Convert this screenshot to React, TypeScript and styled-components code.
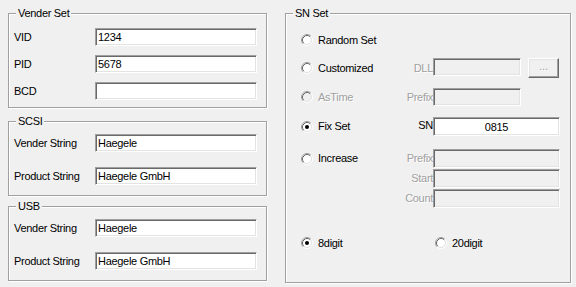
import React from 'react';
import styled, { createGlobalStyle } from 'styled-components';

const FONT = '"Liberation Sans", Arial, sans-serif';

const GlobalStyle = createGlobalStyle`
    html, body {
        margin: 0;
        padding: 0;
        background: #f0f0f0;
    }
    body {
        font-family: ${FONT};
        font-size: 11px;
        letter-spacing: -0.3px;
        color: #000;
    }
`;

const Window = styled.div`
    display: flex;
    align-items: flex-start;
    gap: 18px;
    width: 576px;
    height: 287px;
    box-sizing: border-box;
    padding: 7px 0 0 8px;
    background: #f0f0f0;
`;

const Column = styled.div`
    display: flex;
    flex-direction: column;
    width: 259px;
`;

const GroupBox = styled.fieldset<{ $width: number; $mt?: number }>`
    margin: ${(p) => p.$mt ?? 0}px 0 0 0;
    padding: 0;
    min-width: 0;
    width: ${(p) => p.$width}px;
    box-sizing: border-box;
    border: 1px solid #a0a0a0;
    box-shadow: inset 1px 1px 0 #fff, 1px 1px 0 #fff;
`;

const Caption = styled.legend`
    margin-left: 7px;
    padding: 0 2px;
    line-height: 13px;
    font-size: 11px;
    background: #f0f0f0;
`;

const FieldGrid = styled.div<{ $pt: number; $pb: number; $gap: number }>`
    display: grid;
    grid-template-columns: 81px 162px;
    grid-auto-rows: 18px;
    row-gap: ${(p) => p.$gap}px;
    align-items: center;
    padding: ${(p) => p.$pt}px 0 ${(p) => p.$pb}px 5px;
`;

const FieldLabel = styled.span`
    line-height: 13px;
    white-space: nowrap;
`;

const TextBox = styled.input<{ $w: number; $h: number; $center?: boolean }>`
    box-sizing: border-box;
    width: ${(p) => p.$w}px;
    height: ${(p) => p.$h}px;
    margin: 0;
    padding: 0 2px;
    font-family: ${FONT};
    font-size: 11px;
    letter-spacing: -0.3px;
    color: #000;
    text-align: ${(p) => (p.$center ? 'center' : 'left')};
    background: ${(p) => (p.disabled ? '#f0f0f0' : '#fff')};
    border-style: solid;
    border-width: 1px;
    border-color: #a0a0a0 #fff #fff #a0a0a0;
    box-shadow: inset 1px 1px 0 #696969, inset -1px -1px 0 #e3e3e3;
    outline: none;
`;

const SnBody = styled.div`
    display: flex;
    flex-direction: column;
    padding: 11px 9px 30px 15px;
`;

const OptionRow = styled.div<{ $mt: number; $minH: number }>`
    display: grid;
    grid-template-columns: 106px 26px 127px;
    grid-auto-rows: minmax(${(p) => p.$minH}px, auto);
    row-gap: 1px;
    align-items: center;
    margin-top: ${(p) => p.$mt}px;
`;

const RadioOption = styled.label<{ $disabled?: boolean }>`
    display: flex;
    align-items: center;
    gap: 5px;
    line-height: 13px;
    white-space: nowrap;
    color: ${(p) => (p.$disabled ? '#a0a0a0' : '#000')};
    text-shadow: ${(p) => (p.$disabled ? '1px 1px 0 #fff' : 'none')};
    svg {
        display: block;
        flex: none;
    }
`;

const SideLabel = styled.span<{ $disabled?: boolean; $top?: boolean }>`
    grid-column: 2;
    justify-self: end;
    align-self: ${(p) => (p.$top ? 'start' : 'center')};
    margin-top: ${(p) => (p.$top ? '2px' : '0')};
    line-height: 13px;
    white-space: nowrap;
    color: ${(p) => (p.$disabled ? '#a0a0a0' : '#000')};
    text-shadow: ${(p) => (p.$disabled ? '1px 1px 0 #fff' : 'none')};
`;

const DllCell = styled.div`
    display: flex;
    align-items: flex-start;
    gap: 7px;
`;

const FarCell = styled.div`
    grid-column: 3;
    padding-left: 2px;
`;

const BrowseButton = styled.button`
    box-sizing: border-box;
    width: 31px;
    height: 20px;
    margin: 0;
    padding: 0 0 4px;
    background: #f0f0f0;
    border: 1px solid;
    border-color: #fff #696969 #696969 #fff;
    box-shadow: inset -1px -1px 0 #a0a0a0, inset 1px 1px 0 #e3e3e3;
    color: #a0a0a0;
    text-shadow: 1px 1px 0 #fff;
    font-family: ${FONT};
    font-size: 11px;
    line-height: 13px;
`;

function Radio({ label, checked, disabled }: { label: string; checked?: boolean; disabled?: boolean }) {
    return (
        <RadioOption $disabled={disabled}>
            <svg width="12" height="12" viewBox="0 0 12 12">
                <circle cx="6" cy="6" r="4" fill={disabled ? '#f0f0f0' : '#fff'} />
                <path d="M2.11 9.89 A5.5 5.5 0 0 1 9.89 2.11" fill="none" stroke="#a0a0a0" strokeWidth="1" />
                <path d="M9.89 2.11 A5.5 5.5 0 0 1 2.11 9.89" fill="none" stroke="#fff" strokeWidth="1" />
                <path d="M2.82 9.18 A4.5 4.5 0 0 1 9.18 2.82" fill="none" stroke="#696969" strokeWidth="1" />
                <path d="M9.18 2.82 A4.5 4.5 0 0 1 2.82 9.18" fill="none" stroke="#e3e3e3" strokeWidth="1" />
                {checked && <circle cx="6" cy="6" r="2" fill="#000" />}
            </svg>
            <span>{label}</span>
        </RadioOption>
    );
}

function StringGroup({ title, vender, product, mt }: { title: string; vender: string; product: string; mt: number }) {
    return (
        <GroupBox $width={259} $mt={mt}>
            <Caption>{title}</Caption>
            <FieldGrid $pt={6} $pb={10} $gap={15}>
                <FieldLabel>Vender String</FieldLabel>
                <TextBox $w={162} $h={18} defaultValue={vender} />
                <FieldLabel>Product String</FieldLabel>
                <TextBox $w={162} $h={18} defaultValue={product} />
            </FieldGrid>
        </GroupBox>
    );
}

export default function App() {
    return (
        <>
            <GlobalStyle />
            <Window>
                <Column>
                    <GroupBox $width={259}>
                        <Caption>Vender Set</Caption>
                        <FieldGrid $pt={8} $pb={7} $gap={9}>
                            <FieldLabel>VID</FieldLabel>
                            <TextBox $w={162} $h={18} defaultValue="1234" />
                            <FieldLabel>PID</FieldLabel>
                            <TextBox $w={162} $h={18} defaultValue="5678" />
                            <FieldLabel>BCD</FieldLabel>
                            <TextBox $w={162} $h={18} defaultValue="" />
                        </FieldGrid>
                    </GroupBox>
                    <StringGroup title="SCSI" vender="Haegele" product="Haegele GmbH" mt={7} />
                    <StringGroup title="USB" vender="Haegele" product="Haegele GmbH" mt={4} />
                </Column>

                <GroupBox $width={286}>
                    <Caption>SN Set</Caption>
                    <SnBody>
                        <OptionRow $mt={0} $minH={18}>
                            <Radio label="Random Set" />
                        </OptionRow>
                        <OptionRow $mt={9} $minH={20}>
                            <Radio label="Customized" />
                            <SideLabel $disabled>DLL</SideLabel>
                            <DllCell>
                                <TextBox $w={88} $h={18} disabled />
                                <BrowseButton disabled>...</BrowseButton>
                            </DllCell>
                        </OptionRow>
                        <OptionRow $mt={10} $minH={18}>
                            <Radio label="AsTime" disabled />
                            <SideLabel $disabled>Prefix</SideLabel>
                            <TextBox $w={88} $h={18} disabled />
                        </OptionRow>
                        <OptionRow $mt={11} $minH={19}>
                            <Radio label="Fix Set" checked />
                            <SideLabel $top>SN</SideLabel>
                            <TextBox $w={127} $h={19} $center defaultValue="0815" />
                        </OptionRow>
                        <OptionRow $mt={13} $minH={19}>
                            <Radio label="Increase" />
                            <SideLabel $disabled>Prefix</SideLabel>
                            <TextBox $w={127} $h={19} disabled />
                            <SideLabel $disabled>Start</SideLabel>
                            <TextBox $w={127} $h={19} disabled />
                            <SideLabel $disabled>Count</SideLabel>
                            <TextBox $w={127} $h={19} disabled />
                        </OptionRow>
                        <OptionRow $mt={26} $minH={18}>
                            <Radio label="8digit" checked />
                            <FarCell>
                                <Radio label="20digit" />
                            </FarCell>
                        </OptionRow>
                    </SnBody>
                </GroupBox>
            </Window>
        </>
    );
}
